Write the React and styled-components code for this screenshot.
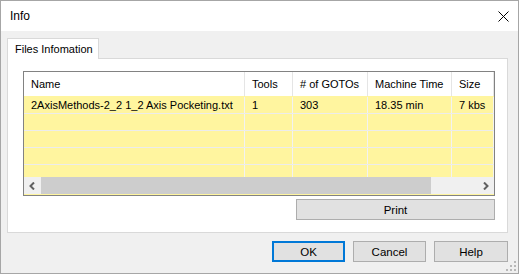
import React from 'react';
import styled, { createGlobalStyle } from 'styled-components';

const GlobalStyle = createGlobalStyle`
  html, body {
    margin: 0;
    padding: 0;
    background: #f0f0f0;
  }
  * {
    box-sizing: border-box;
  }
`;

const Window = styled.div`
  position: relative;
  width: 519px;
  height: 274px;
  border: 1px solid #a6a6a6;
  background: #f0f0f0;
  display: flex;
  flex-direction: column;
  font-family: "Liberation Sans", Arial, sans-serif;
  font-size: 11px;
  color: #000;
`;

const TitleBar = styled.div`
  height: 30px;
  background: #fff;
  display: flex;
  align-items: center;
  justify-content: space-between;
  padding: 0 9px 0 9px;
  font-size: 12px;
`;

const Body = styled.div`
  flex: 1;
  display: flex;
  flex-direction: column;
  padding: 7px 10px 0 6px;
`;

const TabStrip = styled.div`
  display: flex;
`;

const Tab = styled.div`
  width: 92px;
  height: 21px;
  margin-bottom: -1px;
  border: 1px solid #d9d9d9;
  border-bottom: none;
  background: #fff;
  padding: 4px 0 0 7px;
  position: relative;
  white-space: nowrap;
`;

const Panel = styled.div`
  width: 501px;
  height: 175px;
  border: 1px solid #d9d9d9;
  background: #fff;
  padding: 12px 12px 0 14px;
  display: flex;
  flex-direction: column;
  align-items: flex-end;
`;

const Grid = styled.div`
  width: 472px;
  height: 125px;
  border: 1px solid #828282;
  background: #fff59f;
  padding-bottom: 1px;
  display: flex;
  flex-direction: column;
`;

const Viewport = styled.div`
  height: 105px;
  overflow: hidden;
`;

const Row = styled.div`
  display: grid;
  grid-template-columns: 221px 48px 75px 84px 42px;
  height: ${p => (p.$header ? '25px' : '17px')};
  background: ${p => (p.$header ? '#fff' : '#fff59f')};
  border-bottom: 1px solid ${p => (p.$header ? '#fff59f' : '#ececec')};
`;

const Cell = styled.div`
  padding-left: 7px;
  border-right: 1px solid ${p => (p.$header ? '#e5e5e5' : '#f2f2f2')};
  display: flex;
  align-items: center;
  white-space: nowrap;
  overflow: hidden;
`;

const ScrollBar = styled.div`
  height: 17px;
  display: flex;
  background: #f0f0f0;
`;

const ScrollArrow = styled.div`
  width: 17px;
  display: flex;
  align-items: center;
  justify-content: center;
`;

const Thumb = styled.div`
  width: 390px;
  background: #cdcdcd;
`;

const Track = styled.div`
  flex: 1;
`;

const Button = styled.button`
  height: 21px;
  width: ${p => p.$width || 73}px;
  background: #e1e1e1;
  border: ${p => (p.$default ? '2px solid #0078d7' : '1px solid #adadad')};
  font-family: "Liberation Sans", Arial, sans-serif;
  font-size: 11.5px;
  color: #000;
  padding: 0;
`;

const PrintRow = styled.div`
  margin-top: 3px;
`;

const Footer = styled.div`
  display: flex;
  justify-content: flex-end;
  gap: 8px;
  margin-top: 8px;
`;

const Grip = styled.svg`
  position: absolute;
  right: 2px;
  bottom: 2px;
`;

const columns = ['Name', 'Tools', '# of GOTOs', 'Machine Time', 'Size'];
const rows = [
  ['2AxisMethods-2_2 1_2 Axis Pocketing.txt', '1', '303', '18.35 min', '7 kbs'],
  ['', '', '', '', ''],
  ['', '', '', '', ''],
  ['', '', '', '', ''],
  ['', '', '', '', ''],
];

const Chevron = ({ dir }) => (
  <svg width="7" height="8" viewBox="0 0 7 8">
    <path
      d={dir === 'left' ? 'M5 0.5 L1.5 4 L5 7.5' : 'M2 0.5 L5.5 4 L2 7.5'}
      fill="none"
      stroke="#606060"
      strokeWidth="2"
    />
  </svg>
);

export default function App() {
  return (
    <>
      <GlobalStyle />
      <Window>
        <TitleBar>
          <span>Info</span>
          <svg width="11" height="11" viewBox="0 0 11 11">
            <path d="M0.5 0.5 L10.5 10.5 M10.5 0.5 L0.5 10.5" stroke="#000" strokeWidth="1" />
          </svg>
        </TitleBar>
        <Body>
          <TabStrip>
            <Tab>Files Infomation</Tab>
          </TabStrip>
          <Panel>
            <Grid>
              <Viewport>
                <Row $header>
                  {columns.map(c => (
                    <Cell $header key={c}>{c}</Cell>
                  ))}
                </Row>
                {rows.map((r, i) => (
                  <Row key={i}>
                    {r.map((v, j) => (
                      <Cell key={j}>{v}</Cell>
                    ))}
                  </Row>
                ))}
              </Viewport>
              <ScrollBar>
                <ScrollArrow><Chevron dir="left" /></ScrollArrow>
                <Thumb />
                <Track />
                <ScrollArrow><Chevron dir="right" /></ScrollArrow>
              </ScrollBar>
            </Grid>
            <PrintRow>
              <Button $width={199}>Print</Button>
            </PrintRow>
          </Panel>
          <Footer>
            <Button $default>OK</Button>
            <Button>Cancel</Button>
            <Button $width={74}>Help</Button>
          </Footer>
        </Body>
        <Grip width="10" height="10" viewBox="0 0 10 10">
          {[[8, 0], [8, 4], [4, 4], [8, 8], [4, 8], [0, 8]].map(([x, y], i) => (
            <rect key={i} x={x} y={y} width="2" height="2" fill="#b8b8b8" />
          ))}
        </Grip>
      </Window>
    </>
  );
}
